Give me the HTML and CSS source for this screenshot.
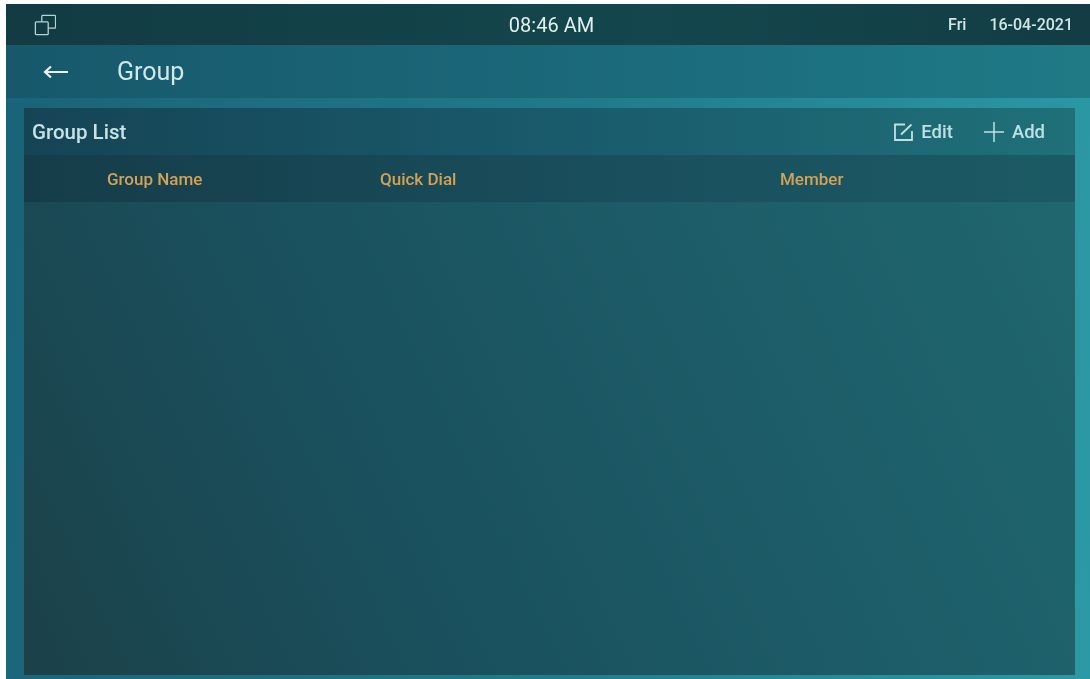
FILE: index.html
```html
<!DOCTYPE html>
<html lang="en">
<head>
  <meta charset="UTF-8" />
  <meta name="viewport" content="width=device-width, initial-scale=1.0" />
  <title>Group</title>
  <link rel="stylesheet" href="styles.css">
</head>
<body>
  <div class="screen">
    <div class="status">
      <svg class="win-icon" width="24" height="24" viewBox="0 0 24 24" fill="none" stroke="currentColor" stroke-width="1.400">
        <rect x="1.500" y="8.500" width="14" height="14" rx="1" />
        <path d="M8.500 8.500V2.500a1 1 0 0 1 1-1h13a1 1 0 0 1 1 1v12a1 1 0 0 1-1 1h-7" />
      </svg>
      <div class="clock">08:46 AM</div>
      <div class="date"><span>Fri</span><span>16-04-2021</span></div>
    </div>

    <div class="titlebar">
      <svg class="back" width="26" height="16" viewBox="0 0 26 16" fill="none" stroke="currentColor" stroke-width="2.200">
        <path d="M25 8H2M8 2.500 2 8l6 5.500" />
      </svg>
      <h1>Group</h1>
    </div>

    <div class="panel">
      <div class="panel-head">
        <h2>Group List</h2>
        <div class="actions">
          <button>
            <svg width="19" height="18" viewBox="0 0 19 18" fill="none" stroke="currentColor" stroke-width="1.800">
              <path d="M11 1.500H1v15.500h17V8" />
              <path d="M7 11.500 17.500 1.500" />
            </svg>
            Edit
          </button>
          <button>
            <svg width="20" height="20" viewBox="0 0 20 20" fill="none" stroke="currentColor" stroke-width="1.500">
              <path d="M10 0v20M0 10h20" />
            </svg>
            Add
          </button>
        </div>
      </div>
      <div class="table-head">
        <div class="col-name">Group Name</div>
        <div class="col-dial">Quick Dial</div>
        <div class="col-member">Member</div>
      </div>
    </div>
  </div>
</body>
</html>
```

FILE: styles.css
```css
html, body { height: 100%; }
body { margin: 0; background: #fff; font-family: Roboto, "Liberation Sans", sans-serif; color: #cfe9ea; overflow: hidden; }
.screen { margin: 4px 0 0 6px; height: 675px; display: flex; flex-direction: column; background: linear-gradient(95deg, #1a6378 0%, #1f7a8a 50%, #2c9aa6 100%); filter: blur(.5px); }

.status { height: 41px; flex: none; display: grid; grid-template-columns: 1fr auto 1fr; align-items: center; padding: 0 17px 0 28px; background: linear-gradient(90deg, #123b43, #13474d 60%, #133c44); }
.win-icon { width: 22px; height: 22px; color: #b5d3d6; }
.clock { font-size: 20px; color: #e2f0f0; padding-right: 4px; }
.date { display: flex; justify-content: flex-end; gap: 23px; font-size: 16px; font-weight: 500; color: #d2e6e7; }

.titlebar { height: 53px; flex: none; display: flex; align-items: center; padding-left: 37px; background: linear-gradient(90deg, #17586b, #1b6b7c 60%, #1f7a86); }
.back { color: #e6f3f3; }
h1 { margin: 0 0 0 48px; font-size: 25px; font-weight: 400; color: #cfe9ea; }

.panel { flex: none; height: 567px; margin: 10px 15px 0 18px; display: flex; flex-direction: column; background: linear-gradient(65deg, #1b4149 0%, #1a4f5c 30%, #1c5c68 65%, #20686f 100%); }
.panel-head { height: 47px; flex: none; display: flex; align-items: center; justify-content: space-between; padding: 0 30px 0 8px; background: linear-gradient(90deg, #154455, #195a6b 50%, #1f7079); }
h2 { margin: 0; font-size: 20.5px; font-weight: 500; color: #c8e3e5; }
.actions { display: flex; gap: 31px; }
button { display: flex; align-items: center; gap: 8px; padding: 0; border: 0; background: none; font: 500 18.500px Roboto, "Liberation Sans", sans-serif; color: #bfe0e2; }

.table-head { height: 47px; flex: none; display: flex; align-items: center; font-size: 17px; font-weight: 500; color: #d1a258; background: linear-gradient(90deg, #153c49, #1a505e 60%, #1b5a64); }
.col-name { margin-left: 83px; width: 273px; }
.col-dial { width: 400px; }
```
